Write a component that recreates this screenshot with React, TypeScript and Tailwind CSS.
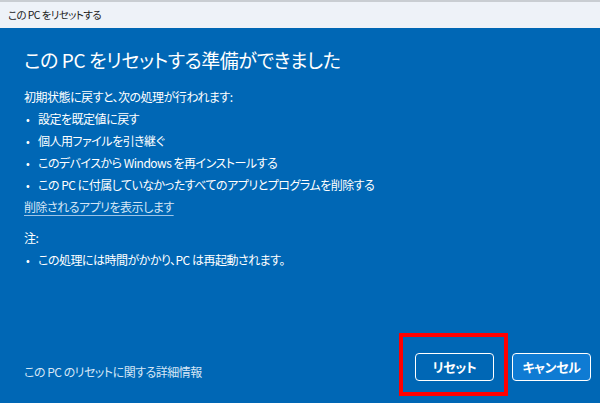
const bullets = [
  '設定を既定値に戻す',
  '個人用ファイルを引き継ぐ',
  'このデバイスから Windows を再インストールする',
  'この PC に付属していなかったすべてのアプリとプログラムを削除する',
];

function Bullet({ children }: { children: React.ReactNode }) {
  return (
    <li className="flex h-[22px] items-center">
      <span className="w-[14px] pl-[2px] text-[11px]">•</span>
      <span>{children}</span>
    </li>
  );
}

export default function App() {
  return (
    <div className="flex h-[403px] w-[600px] flex-col overflow-hidden bg-white font-['Noto_Sans_CJK_JP',sans-serif] [font-feature-settings:'palt']">
      <div className="flex h-[28px] shrink-0 items-center border-t-2 border-[#c9cdd2] bg-[#eef2f8] pl-[8px] text-[10.5px] tracking-[-0.6px] text-[#1b1b1b]">
        この PC をリセットする
      </div>
      <div className="flex flex-1 flex-col bg-[#0067b5] px-[24px] text-white">
        <h1 className="mt-[18px] text-[19px] leading-[28px] tracking-[-0.4px]">
          この PC をリセットする準備ができました
        </h1>
        <div className="mt-[12px] text-[12px] tracking-[-0.5px]">
          <p className="flex h-[22px] items-center">初期状態に戻すと、次の処理が行われます:</p>
          <ul>
            {bullets.map((b) => (
              <Bullet key={b}>{b}</Bullet>
            ))}
          </ul>
          <a className="flex h-[22px] items-center text-[#d5e6f6] underline decoration-[#9ec3e6] underline-offset-[3px]">
            削除されるアプリを表示します
          </a>
          <p className="mt-[9px] flex h-[22px] items-center">注:</p>
          <ul>
            <Bullet>この処理には時間がかかり、PC は再起動されます。</Bullet>
          </ul>
        </div>
        <div className="mt-auto mb-[7px] flex items-end justify-between">
          <span className="mb-[16px] text-[12px] leading-[16px] tracking-[-0.5px] text-[#d5e6f6]">
            この PC のリセットに関する詳細情報
          </span>
          <div className="flex items-end gap-[4px]">
            <div className="border-[4px] border-[#ff0000] pt-[16px] pr-[10px] pb-[11px] pl-[12px]">
              <button className="flex h-[28px] w-[79px] items-center justify-center rounded-[4px] border-[1.5px] border-white bg-[#0067b5] text-[13px] font-bold tracking-[-0.4px] text-white">
                リセット
              </button>
            </div>
            <button className="mr-[-15px] mb-[15px] flex h-[28px] w-[79px] items-center justify-center rounded-[4px] border-[1.5px] border-white bg-[#0f7bd3] text-[13px] font-bold tracking-[-0.4px] text-white">
              キャンセル
            </button>
          </div>
        </div>
      </div>
    </div>
  );
}
